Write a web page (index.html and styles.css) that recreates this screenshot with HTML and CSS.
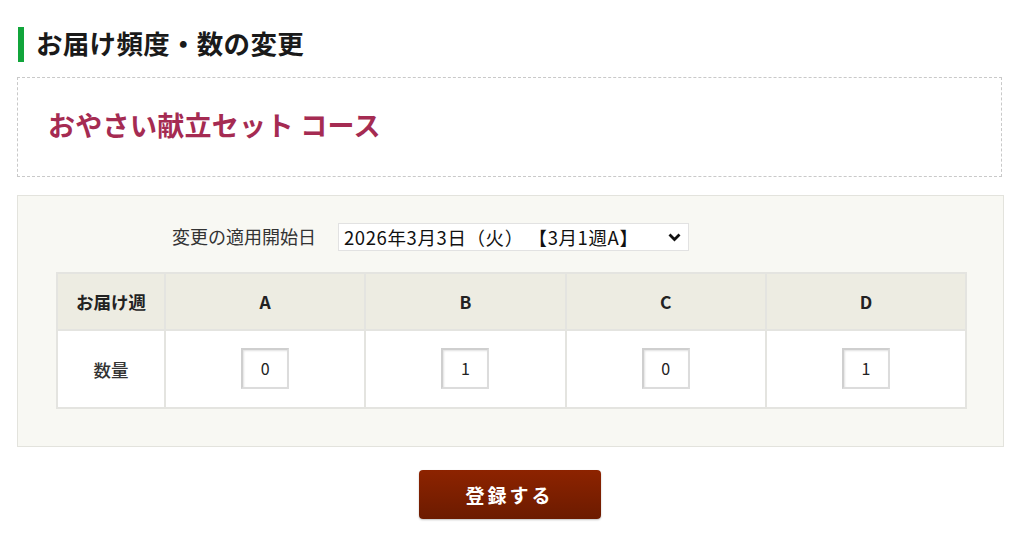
FILE: index.html
```html
<!DOCTYPE html>
<html lang="ja">
<head>
<meta charset="utf-8">
<link rel="stylesheet" href="styles.css">
</head>
<body>
<div class="page">
  <h1 class="title">お届け頻度・数の変更</h1>
  <div class="course-box">
    <h2 class="course-name">おやさい献立セット コース</h2>
  </div>
  <div class="panel">
    <div class="date-row">
      <span class="date-label">変更の適用開始日</span>
      <div class="select">
        <span>2026年3月3日（火） 【3月1週A】</span>
        <svg class="chev" width="13" height="9" viewBox="0 0 13 9"><path d="M1.5 1.5 L6.5 6.5 L11.5 1.5" fill="none" stroke="#111" stroke-width="2.8"/></svg>
      </div>
    </div>
    <table class="qty-table">
      <tr class="head">
        <th class="first">お届け週</th>
        <th>A</th><th>B</th><th>C</th><th>D</th>
      </tr>
      <tr class="body">
        <td class="first">数量</td>
        <td><span class="qty">0</span></td>
        <td><span class="qty">1</span></td>
        <td><span class="qty">0</span></td>
        <td><span class="qty">1</span></td>
      </tr>
    </table>
  </div>
  <div class="actions">
    <button class="submit">登録する</button>
  </div>
</div>
</body>
</html>
```

FILE: styles.css
```css
* { box-sizing: border-box; }
html, body { margin: 0; padding: 0; background: #fff; }
body {
  font-family: "Noto Sans CJK JP", "Noto Sans", sans-serif;
  color: #222;
  width: 1024px;
  height: 538px;
  overflow: hidden;
}
.page {
  padding: 27px 21px 0 17px;
}
.title {
  margin: 0 0 15px 1px;
  height: 35px;
  border-left: 6px solid #11a53b;
  padding-left: 12px;
  font-size: 26.5px;
  font-weight: 700;
  line-height: 32px;
  color: #1a1a1a;
  letter-spacing: 0.3px;
}
.course-box {
  border: 1px dashed #c9c9c9;
  height: 100px;
  display: flex;
  align-items: center;
  padding-left: 30px;
  width: 985px;
}
.course-name {
  margin: -6px 0 0 0;
  font-size: 27px;
  font-weight: 700;
  color: #a52b52;
  letter-spacing: 0.3px;
}
.panel {
  margin-top: 18px;
  width: 987px;
  height: 252px;
  background: #f8f8f3;
  border: 1px solid #e3e3dd;
  padding: 27px 38px 0 38px;
}
.date-row {
  display: flex;
  align-items: center;
  padding-left: 116px;
  height: 28px;
}
.date-label {
  font-size: 18px;
  color: #333;
  margin-right: 22px;
  margin-top: -2px;
}
.select {
  width: 351px;
  height: 28px;
  background: #fff;
  border: 1px solid #e2e2e2;
  display: flex;
  align-items: center;
  justify-content: space-between;
  padding: 0 7px 0 5px;
  font-size: 18.5px;
  letter-spacing: 0.6px;
  color: #111;
}
.chev { margin-right: 0; }
.qty-table {
  margin-top: 21px;
  border-collapse: collapse;
  width: 911px;
  font-size: 17.5px;
}
.qty-table th, .qty-table td {
  border: 2px solid #e4e4e0;
  text-align: center;
  padding: 0;
}
.qty-table th {
  background: #edece2;
  height: 57px;
  font-weight: 700;
  color: #222;
}
.qty-table .first { width: 108px; }
.qty-table td {
  background: #fff;
  height: 78px;
  color: #333;
}
.qty-table td.first { font-weight: 500; }
.qty {
  display: inline-block;
  width: 48px;
  height: 41px;
  line-height: 37px;
  border: 2px solid #dcdcdc;
  border-top-color: #cfcfcf;
  border-left-color: #cfcfcf;
  box-shadow: inset 1px 1px 2px rgba(0,0,0,0.12);
  background: #fff;
  font-size: 16px;
  color: #222;
  vertical-align: middle;
  margin-top: -1px;
}
.actions {
  display: flex;
  justify-content: center;
  margin-top: 23px;
}
.submit {
  width: 182px;
  height: 49px;
  border: none;
  border-radius: 4px;
  background: linear-gradient(#8d2300, #6c1b00);
  color: #fff;
  font-family: "Noto Sans CJK JP", sans-serif;
  font-size: 19px;
  font-weight: 700;
  letter-spacing: 3px;
  padding-left: 5px;
  box-shadow: 0 1px 2px rgba(0,0,0,0.25);
}
```
